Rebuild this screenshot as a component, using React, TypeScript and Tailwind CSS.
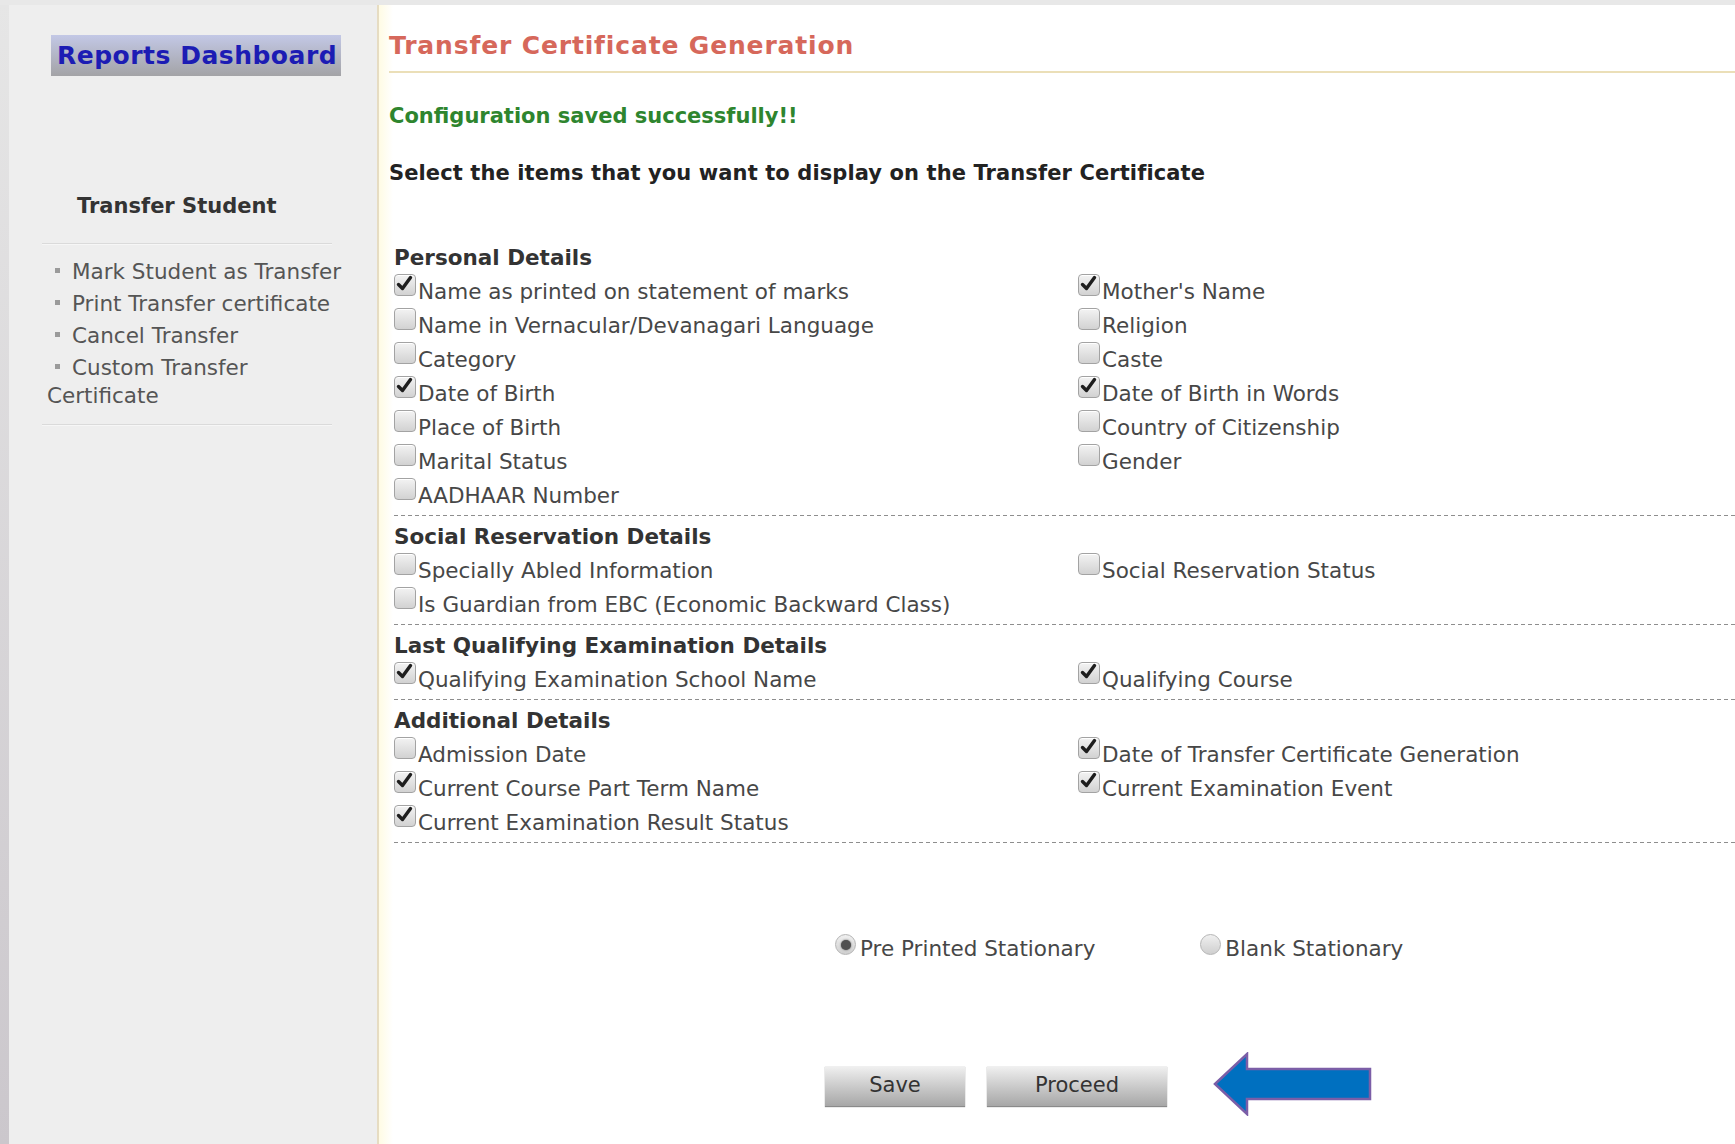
import React from "react";

type Item = { label: string; checked: boolean };
type Section = { title: string; left: Item[]; right: Item[] };

const sections: Section[] = [
  {
    title: "Personal Details",
    left: [
      { label: "Name as printed on statement of marks", checked: true },
      { label: "Name in Vernacular/Devanagari Language", checked: false },
      { label: "Category", checked: false },
      { label: "Date of Birth", checked: true },
      { label: "Place of Birth", checked: false },
      { label: "Marital Status", checked: false },
      { label: "AADHAAR Number", checked: false },
    ],
    right: [
      { label: "Mother's Name", checked: true },
      { label: "Religion", checked: false },
      { label: "Caste", checked: false },
      { label: "Date of Birth in Words", checked: true },
      { label: "Country of Citizenship", checked: false },
      { label: "Gender", checked: false },
    ],
  },
  {
    title: "Social Reservation Details",
    left: [
      { label: "Specially Abled Information", checked: false },
      { label: "Is Guardian from EBC (Economic Backward Class)", checked: false },
    ],
    right: [{ label: "Social Reservation Status", checked: false }],
  },
  {
    title: "Last Qualifying Examination Details",
    left: [{ label: "Qualifying Examination School Name", checked: true }],
    right: [{ label: "Qualifying Course", checked: true }],
  },
  {
    title: "Additional Details",
    left: [
      { label: "Admission Date", checked: false },
      { label: "Current Course Part Term Name", checked: true },
      { label: "Current Examination Result Status", checked: true },
    ],
    right: [
      { label: "Date of Transfer Certificate Generation", checked: true },
      { label: "Current Examination Event", checked: true },
    ],
  },
];

const sideLinks = [
  "Mark Student as Transfer",
  "Print Transfer certificate",
  "Cancel Transfer",
  "Custom Transfer Certificate",
];

function Box({ checked }: { checked: boolean }) {
  return (
    <span className="relative mt-[-1px] inline-block h-[22px] w-[22px] shrink-0 rounded-[4px] border border-[#a3a3a3] bg-linear-to-b from-[#f3f3f3] to-[#d2d2d2] shadow-[inset_0_1px_0_#ffffff]">
      {checked && (
        <svg viewBox="0 0 22 22" className="absolute left-[-1px] top-[-2px] h-[22px] w-[22px]">
          <path d="M4.5 11.5 L8.5 15.5 L16.5 4.5" fill="none" stroke="#1e1e1e" strokeWidth="3.4" strokeLinecap="round" strokeLinejoin="round" />
        </svg>
      )}
    </span>
  );
}

function CheckRow({ item }: { item?: Item }) {
  if (!item) return <div className="h-[34px]" />;
  return (
    <label className="flex h-[34px] items-start">
      <Box checked={item.checked} />
      <span className="ml-[2px] whitespace-nowrap text-[21.5px] leading-[34px] text-[#474747]">{item.label}</span>
    </label>
  );
}

function Radio({ on, label }: { on: boolean; label: string }) {
  return (
    <label className="flex h-[34px] items-start">
      <span className="mt-[2px] flex h-[21px] w-[21px] shrink-0 items-center justify-center rounded-full border border-[#b5b5b5] bg-linear-to-b from-[#f0f0f0] to-[#cfcfcf]">
        {on && <span className="h-[10px] w-[10px] rounded-full bg-[#505050] shadow-[0_0_2px_#505050]" />}
      </span>
      <span className="ml-[4px] whitespace-nowrap text-[21.5px] leading-[34px] text-[#474747]">{label}</span>
    </label>
  );
}

function Dashes() {
  return <div className="h-[1px] bg-[repeating-linear-gradient(to_right,#8e8e8e_0_4px,transparent_4px_7px)]" />;
}

function Sidebar() {
  return (
    <aside className="w-[368px] shrink-0 bg-[#eeeeee] pt-[30px]">
      <div className="ml-[42px] flex h-[41px] w-[290px] items-center bg-linear-to-b from-[#c3c8e6] to-[#a3a3a6] pl-[6px]">
        <span className="text-[25px] font-bold tracking-[0.5px] text-[#1c1cb4]">Reports Dashboard</span>
      </div>
      <div className="ml-[68px] mt-[115px] text-[21px] font-bold leading-[30px] text-[#333333]">Transfer Student</div>
      <div className="ml-[33px] mt-[22px] h-[2px] w-[290px] border-t border-[#dadada] bg-[#f6f6f6]" />
      <ul className="mt-[13px] w-[345px] pl-[38px] text-[21.5px] leading-[28px] text-[#555555]">
        {sideLinks.map((t) => (
          <li key={t} className="mb-[4px]">
            <span className="mb-[5px] ml-[8px] mr-[12px] inline-block h-[5px] w-[5px] bg-[#9a9a9a] align-middle" />
            {t}
          </li>
        ))}
      </ul>
      <div className="ml-[33px] mt-[14px] h-[2px] w-[290px] border-t border-[#dadada] bg-[#f6f6f6]" />
    </aside>
  );
}

export default function App() {
  return (
    <div className="flex h-[1144px] w-[1735px] overflow-hidden bg-[#e8e8e8] pt-[5px] font-['DejaVu_Sans',sans-serif]">
      <div className="w-[9px] shrink-0 bg-linear-to-b from-[#e6e6e6] to-[#cbc7cc]" />
      <Sidebar />
      <main className="min-w-0 flex-1 border-l-2 border-[#e6dcc2] bg-[linear-gradient(to_right,#fffbe4,#ffffff_14px)] pl-[10px] pt-[24px]">
        <h1 className="whitespace-nowrap text-[25px] font-bold leading-[34px] tracking-[0.85px] text-[#d6685b]">
          Transfer Certificate Generation
        </h1>
        <div className="mt-[8px] h-[2px] bg-[#ebdfb8]" />
        <p className="mt-[28px] text-[21px] font-bold leading-[30px] text-[#2e852e]">Configuration saved successfully!!</p>
        <p className="mt-[27px] whitespace-nowrap text-[21px] font-bold leading-[30px] tracking-[0.1px] text-[#222222]">
          Select the items that you want to display on the Transfer Certificate
        </p>

        <div className="mt-[49px] pl-[5px]">
          {sections.map((s) => {
            const n = Math.max(s.left.length, s.right.length);
            return (
              <section key={s.title}>
                <div className="pb-[2px] pt-[6px]">
                  <h2 className="mb-[2px] h-[30px] text-[21.5px] font-bold leading-[30px] text-[#333333]">{s.title}</h2>
                  <div className="grid grid-cols-[684px_1fr]">
                    {Array.from({ length: n }).flatMap((_, i) => [
                      <CheckRow key={`l${i}`} item={s.left[i]} />,
                      <CheckRow key={`r${i}`} item={s.right[i]} />,
                    ])}
                  </div>
                </div>
                <Dashes />
              </section>
            );
          })}

          <div className="ml-[441px] mt-[89px] flex gap-[105px]">
            <Radio on label="Pre Printed Stationary" />
            <Radio on={false} label="Blank Stationary" />
          </div>

          <div className="ml-[431px] mt-[90px] flex items-center">
            <button className="h-[40px] w-[140px] bg-linear-to-b from-[#f1f1f1] to-[#a7a7a7] text-[21px] text-[#333333] shadow-[0_1px_1px_#8a8a8a]">
              Save
            </button>
            <button className="ml-[22px] h-[40px] w-[180px] bg-linear-to-b from-[#f1f1f1] to-[#a7a7a7] text-[21px] text-[#333333] shadow-[0_1px_1px_#8a8a8a]">
              Proceed
            </button>
            <svg width="160" height="64" viewBox="0 0 160 64" className="ml-[46px] mt-[-4px]">
              <polygon points="2,32 34,2 34,17 157,17 157,47 34,47 34,62" fill="#0070c0" stroke="#7b5ea7" strokeWidth="2.5" strokeLinejoin="miter" />
            </svg>
          </div>
        </div>
      </main>
    </div>
  );
}
